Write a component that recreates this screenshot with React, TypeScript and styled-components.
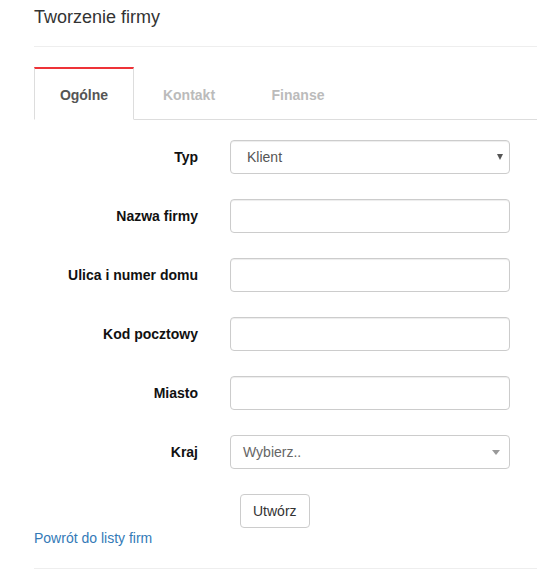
import React from 'react';
import styled, { createGlobalStyle } from 'styled-components';

const GlobalStyle = createGlobalStyle`
  body {
    margin: 0;
    background: #fff;
    font-family: "Liberation Sans", Arial, sans-serif;
    font-size: 14px;
    color: #333;
  }
`;

const fields = [
  { label: 'Typ', kind: 'select', value: 'Klient' },
  { label: 'Nazwa firmy', kind: 'input' },
  { label: 'Ulica i numer domu', kind: 'input' },
  { label: 'Kod pocztowy', kind: 'input' },
  { label: 'Miasto', kind: 'input' },
  { label: 'Kraj', kind: 'select2', value: 'Wybierz..' },
];

const tabs = [
  { name: 'Ogólne', width: 100 },
  { name: 'Kontakt', width: 110 },
  { name: 'Finanse', width: 108 },
];

const App: React.FC = () => {
  return (
    <Page>
      <GlobalStyle />
      <Title>Tworzenie firmy</Title>
      <Rule />
      <TabBar>
        {tabs.map((t, i) => (
          <Tab key={t.name} active={i === 0} width={t.width}>
            {t.name}
          </Tab>
        ))}
      </TabBar>
      <Form>
        {fields.map(f => (
          <Row key={f.label}>
            <Label>{f.label}</Label>
            {f.kind === 'input' ? (
              <Input />
            ) : (
              <Select variant={f.kind}>
                <span>{f.value}</span>
                <Caret variant={f.kind} />
              </Select>
            )}
          </Row>
        ))}
        <ButtonRow>
          <Button>Utwórz</Button>
        </ButtonRow>
      </Form>
      <BackLink href="#">Powrót do listy firm</BackLink>
      <BottomRule />
    </Page>
  );
};

export default App;

const Page = styled.div`
  padding-left: 34px;
`;

const Title = styled.h2`
  margin: 0;
  padding-top: 6px;
  font-size: 18px;
  font-weight: 400;
  line-height: 22px;
  color: #333;
`;

const Rule = styled.div`
  margin-top: 18px;
  height: 1px;
  background: #eee;
`;

const TabBar = styled.div`
  display: flex;
  margin-top: 20px;
  border-bottom: 1px solid #ddd;
  height: 52px;
`;

const Tab = styled.div<{ active?: boolean; width: number }>`
  width: ${({ width }) => width}px;
  box-sizing: border-box;
  display: flex;
  align-items: center;
  justify-content: center;
  margin-bottom: -1px;
  font-size: 14px;
  font-weight: 700;
  color: ${({ active }) => (active ? '#555' : '#bbb')};
  background: ${({ active }) => (active ? '#fff' : 'transparent')};
  border-top: 2px solid ${({ active }) => (active ? '#ee3338' : 'transparent')};
  border-left: 1px solid ${({ active }) => (active ? '#ddd' : 'transparent')};
  border-right: 1px solid ${({ active }) => (active ? '#ddd' : 'transparent')};
  border-bottom: 1px solid ${({ active }) => (active ? '#fff' : 'transparent')};
  padding-top: 1px;
`;

const Form = styled.div`
  display: flex;
  flex-direction: column;
  gap: 25px;
  padding-top: 20px;
`;

const Row = styled.div`
  display: grid;
  grid-template-columns: 164px 280px;
  column-gap: 32px;
  align-items: center;
`;

const Label = styled.label`
  text-align: right;
  font-size: 14px;
  font-weight: 700;
  color: #111;
`;

const Input = styled.div`
  height: 34px;
  box-sizing: border-box;
  border: 1px solid #ccc;
  border-radius: 4px;
  background: #fff;
  box-shadow: inset 0 1px 1px rgba(0, 0, 0, 0.075);
`;

const Select = styled(Input)<{ variant?: string }>`
  display: flex;
  align-items: center;
  justify-content: space-between;
  padding: ${({ variant }) => (variant === 'select' ? '0 5px 0 16px' : '0 8px 0 12px')};
  font-size: 14px;
  color: ${({ variant }) => (variant === 'select' ? '#555' : '#666')};
  box-shadow: ${({ variant }) => (variant === 'select' ? 'inset 0 1px 1px rgba(0,0,0,0.075)' : 'none')};
`;

const Caret = styled.span<{ variant?: string }>`
  width: 0;
  height: 0;
  border-left: ${({ variant }) => (variant === 'select' ? '3px' : '4px')} solid transparent;
  border-right: ${({ variant }) => (variant === 'select' ? '3px' : '4px')} solid transparent;
  border-top: ${({ variant }) => (variant === 'select' ? '6px solid #555' : '5px solid #999')};
  margin-right: 1px;
`;

const ButtonRow = styled.div`
  padding-left: 206px;
`;

const Button = styled.button`
  height: 34px;
  padding: 0 12px;
  font-family: inherit;
  font-size: 14px;
  color: #333;
  background: #fff;
  border: 1px solid #ccc;
  border-radius: 4px;
`;

const BackLink = styled.a`
  display: block;
  margin-top: 0;
  font-size: 14px;
  line-height: 20px;
  color: #337ab7;
  text-decoration: none;
`;

const BottomRule = styled.div`
  margin-top: 20px;
  height: 1px;
  background: #eee;
`;
